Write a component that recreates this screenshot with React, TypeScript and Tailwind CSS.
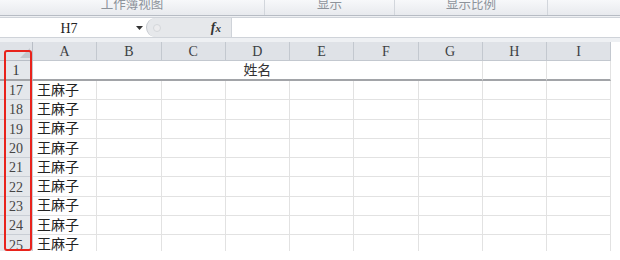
const COLS = ['A', 'B', 'C', 'D', 'E', 'F', 'G', 'H', 'I']
const ROWS = [17, 18, 19, 20, 21, 22, 23, 24, 25]

const font = "font-['Liberation_Serif','Noto_Sans_CJK_SC',serif]"

export default function App() {
  return (
    <div className={`relative h-[260px] w-[620px] overflow-hidden bg-white ${font}`}>
      {/* ribbon group labels, clipped at the top */}
      <div className="flex h-[16px] overflow-hidden border-b border-[#b7bcc4] bg-gradient-to-b from-[#f7f8fa] to-[#e8eaee] text-[12.5px] leading-none text-[#8d939b]">
        <div className="flex w-[265px] justify-center border-r border-[#d2d6dc]">
          <span className="-mt-[2px] font-['Noto_Sans_CJK_SC',sans-serif]">工作簿视图</span>
        </div>
        <div className="flex w-[130px] justify-center border-r border-[#d2d6dc]">
          <span className="-mt-[2px] font-['Noto_Sans_CJK_SC',sans-serif]">显示</span>
        </div>
        <div className="flex w-[153px] justify-center border-r border-[#d2d6dc]">
          <span className="-mt-[2px] font-['Noto_Sans_CJK_SC',sans-serif]">显示比例</span>
        </div>
        <div className="flex-1" />
      </div>

      {/* formula bar */}
      <div className="bg-[#eef0f3] pt-[1px] pb-[4px]">
        <div className="flex h-[21px] border-y border-[#cfd3d9] bg-white">
          <div className="flex w-[146px] items-center pl-[3px]">
            <span className="flex-1 pt-[1px] text-center text-[14px] text-[#222]">H7</span>
            <svg width="9" height="6" viewBox="0 0 9 6" className="mr-[2px]">
              <path d="M1 1h7L4.5 5z" fill="#333" />
            </svg>
          </div>
          <div className="flex w-[85px] items-center rounded-l-full border-l border-[#c4c8ce] bg-[#e6e8eb] pl-[6px]">
            <span className="h-[8px] w-[8px] rounded-full border border-[#d4d7db] bg-[#ececee]" />
            <span className="ml-auto mr-[10px] text-[14px] font-bold italic text-[#333]">
              f<span className="text-[11px]">x</span>
            </span>
          </div>
          <div className="flex-1 border-l border-[#cfd3d9]" />
        </div>
      </div>

      {/* sheet grid */}
      <div className="h-[209px] overflow-hidden">
        <div className="grid grid-cols-[33px_repeat(9,64.25px)] text-[14px]">
          {/* header row */}
          <div className="relative h-[19px] border-r border-b border-[#b9bec6] bg-[#dfe2e7]">
            <svg width="10" height="10" viewBox="0 0 10 10" className="absolute right-[2px] bottom-[2px]">
              <path d="M10 0v10H0z" fill="#c3c7cd" />
            </svg>
          </div>
          {COLS.map((c) => (
            <div
              key={c}
              className="flex h-[19px] items-center justify-center border-r border-b border-[#c3c8cf] bg-[#dfe2e7] pt-[1px] text-[#3c3f44]"
            >
              {c}
            </div>
          ))}

          {/* row 1 */}
          <div className="flex h-[20px] items-center justify-center border-r border-b-2 border-r-[#c3c8cf] border-b-[#a2a4a8] bg-[#e4e7eb] pt-[1px] text-[#333]">
            1
          </div>
          <div className="col-span-7 flex h-[20px] items-center justify-center border-r border-b-2 border-r-[#e2e2e2] border-b-[#a2a4a8] text-[#333]">
            姓名
          </div>
          <div className="h-[20px] border-r border-b-2 border-r-[#e2e2e2] border-b-[#a2a4a8]" />
          <div className="h-[20px] border-r border-b-2 border-r-[#e2e2e2] border-b-[#a2a4a8]" />

          {ROWS.map((r) => (
            <div key={r} className="contents">
              <div className="flex h-[19.3px] items-center justify-center border-r border-b border-[#c9ced5] bg-[#e4e7eb] pt-[1px] text-[#444]">
                {r}
              </div>
              <div className="flex h-[19.3px] items-center border-r border-b border-[#e2e2e2] pl-[4px] text-[#222]">
                王麻子
              </div>
              {COLS.slice(1).map((c) => (
                <div key={c} className="h-[19.3px] border-r border-b border-[#e2e2e2]" />
              ))}
            </div>
          ))}
        </div>
      </div>

      {/* red annotation box */}
      <div className="absolute top-[50px] left-[4px] h-[201px] w-[28px] rounded-[3px] border-2 border-[#e8231c]" />
    </div>
  )
}
